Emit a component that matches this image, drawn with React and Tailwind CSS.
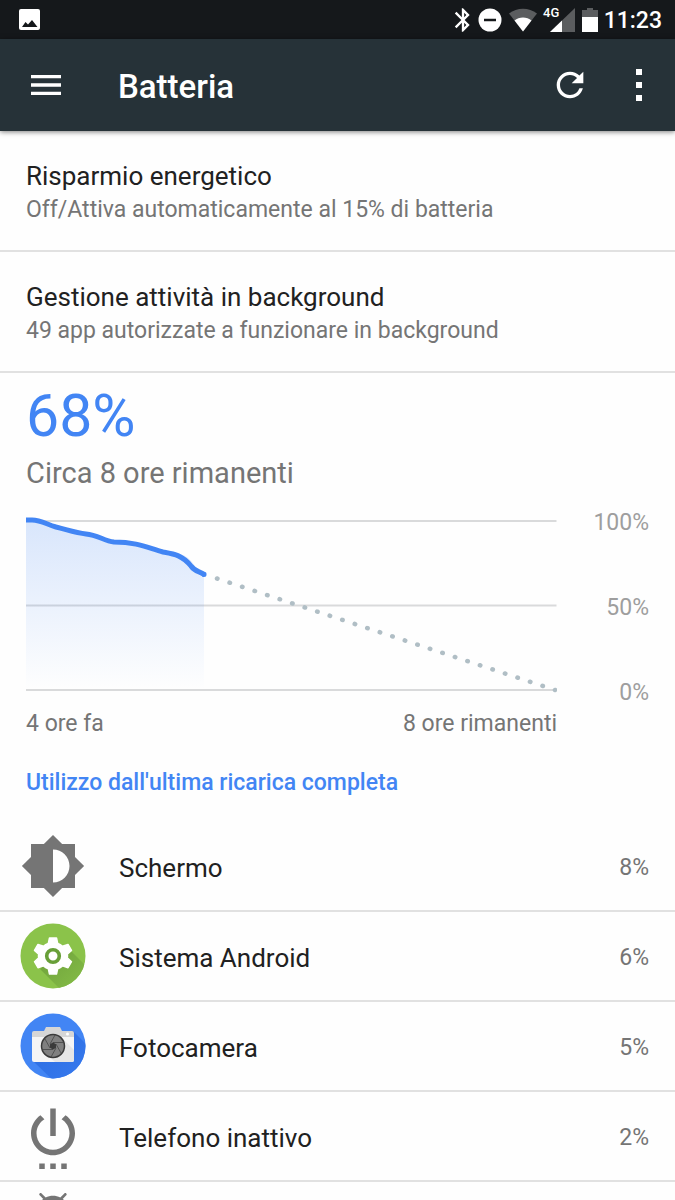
import { MdRefresh, MdMenu, MdBluetooth } from 'react-icons/md'

const usage = [
  { name: 'Schermo', value: '8%', Icon: ScreenIcon },
  { name: 'Sistema Android', value: '6%', Icon: SystemIcon },
  { name: 'Fotocamera', value: '5%', Icon: CameraIcon },
  { name: 'Telefono inattivo', value: '2%', Icon: IdleIcon },
  { name: '', value: '', Icon: AndroidIcon },
]

function ScreenIcon() {
  return (
    <svg viewBox="0 0 24 24" className="size-[66px] fill-[#757575]">
      <path d="M20 15.31L23.31 12 20 8.69V4h-4.69L12 .69 8.69 4H4v4.69L.69 12 4 15.31V20h4.69L12 23.31 15.31 20H20v-4.69zM12 18V6c3.31 0 6 2.69 6 6s-2.69 6-6 6z" />
    </svg>
  )
}

function SystemIcon() {
  return (
    <svg viewBox="0 0 66 66" className="size-[66px]">
      <defs>
        <clipPath id="systemClip"><circle cx="33" cy="33" r="32.5" /></clipPath>
        <linearGradient id="systemShade" x1="0" y1="0" x2="1" y2="1">
          <stop offset="0.2" stopColor="#74a83e" />
          <stop offset="0.7" stopColor="#85bd47" />
        </linearGradient>
      </defs>
      <circle cx="33" cy="33" r="32.5" fill="#8bc34a" />
      <path d="M50 27L82 59L56 82L20 46L33 33z" fill="url(#systemShade)" clipPath="url(#systemClip)" />
      {/* six-toothed gear with notched sides */}
      <path fill="#fff" stroke="#fff" strokeWidth="1.5" strokeLinejoin="round" d="M29.500 15h7l1.200 5.500c1.800.6 3.400 1.500 4.800 2.800l5.500-1.800l3.500 6l-4.200 3.800c.3 1.200.3 2.400 0 3.600l4.200 3.800l-3.500 6l-5.500-1.800c-1.400 1.300-3 2.200-4.800 2.800L36.500 51h-7l-1.200-5.300c-1.800-.6-3.400-1.500-4.800-2.800l-5.500 1.800l-3.500-6l4.200-3.800c-.3-1.200-.3-2.400 0-3.600l-4.200-3.800l3.500-6l5.500 1.800c1.400-1.300 3-2.200 4.800-2.800z" />
      <circle cx="33" cy="33" r="6.300" fill="#fff" stroke="#689f38" strokeWidth="3.600" />
    </svg>
  )
}

function CameraIcon() {
  return (
    <svg viewBox="0 0 66 66" className="size-[66px]">
      <defs>
        <clipPath id="cameraClip"><circle cx="33" cy="33" r="32.5" /></clipPath>
        <linearGradient id="cameraShade" x1="0" y1="0" x2="1" y2="1">
          <stop offset="0" stopColor="#2a6be0" />
          <stop offset="1" stopColor="#3b7ef2" />
        </linearGradient>
      </defs>
      <circle cx="33" cy="33" r="32.5" fill="#4285f4" />
      <path d="M53 18L80 45V80H46L13 48z" fill="url(#cameraShade)" clipPath="url(#cameraClip)" />
      <path d="M24 18l2-4h14l2 4h10a2 2 0 0 1 2 2v5H12v-5a2 2 0 0 1 2-2z" fill="#d6d6d6" />
      <path d="M12 24h42v23a2 2 0 0 1-2 2H14a2 2 0 0 1-2-2z" fill="#f5f5f5" />
      <path d="M42 25L54 37v10a2 2 0 0 1-2 2H35l-8-7z" fill="#e6e6e6" />
      <circle cx="47.500" cy="21" r="1.500" fill="#fff" />
      <circle cx="33" cy="33" r="11.500" fill="#808080" stroke="#3a3a3a" strokeWidth="1.500" />
      <path d="M33 29.500L43 29.500M36 31L41 40M36 35L31 44M33 36.500L23 36.500M30 35L25 26M30 31L35 22" stroke="#454545" strokeWidth="0.8" />
      <path d="M33 29.500l3 1.750v3.500l-3 1.750l-3 -1.750v-3.500z" fill="#3a3a3a" />
    </svg>
  )
}

function IdleIcon() {
  return (
    <svg viewBox="0 0 24 24" className="size-[66px] fill-[#757575]">
      <path d="M7 24h2v-2H7v2zm4 0h2v-2h-2v2zm2-22h-2v10h2V2zm3.56 2.44l-1.45 1.45C16.84 6.94 18 8.83 18 11c0 3.31-2.69 6-6 6s-6-2.69-6-6c0-2.17 1.16-4.06 2.88-5.12L7.44 4.44C5.36 5.88 4 8.28 4 11c0 4.42 3.58 8 8 8s8-3.58 8-8c0-2.72-1.36-5.12-3.44-6.56zM15 24h2v-2h-2v2z" />
    </svg>
  )
}

function AndroidIcon() {
  return (
    <svg viewBox="0 0 24 24" className="size-[66px] fill-[#757575]">
      <path d="M6 18c0 .55.45 1 1 1h1v3.500c0 .83.67 1.500 1.500 1.500s1.500-.67 1.500-1.500V19h2v3.500c0 .83.67 1.500 1.500 1.500s1.500-.67 1.500-1.500V19h1c.55 0 1-.45 1-1V8H6v10zM15.530 2.160l1.300-1.300c.2-.2.2-.51 0-.71-.2-.2-.51-.2-.71 0l-1.480 1.480C13.850 1.230 12.950 1 12 1c-.96 0-1.860.23-2.660.63L7.850.15c-.2-.2-.51-.2-.71 0-.2.2-.2.51 0 .71l1.310 1.310C6.970 3.260 6 5.010 6 7h12c0-1.990-.97-3.750-2.470-4.840z" />
    </svg>
  )
}

function StatusBar() {
  return (
    <div className="flex h-[39px] shrink-0 items-center justify-between bg-[#15181b] pr-[13px] pl-[19px] text-white">
      <svg viewBox="0 0 21 21" className="size-[21px]">
        <rect width="21" height="21" rx="2" fill="#fff" />
        <path d="M3 18L6.500 13L9 15.500L13 11L18.500 18z" fill="#15181b" />
      </svg>
      <div className="flex items-center">
        <MdBluetooth className="h-7 w-7" />
        <svg viewBox="0 0 24 24" className="ml-px size-6">
          <circle cx="12" cy="12" r="11.500" fill="#fff" />
          <path d="M6 12h12" stroke="#15181b" strokeWidth="2.500" />
        </svg>
        <svg viewBox="0 0 30 24" className="ml-1.5 h-6 w-[30px]">
          <path d="M15 23.500L1 5.500C9 -1 21 -1 29 5.500z" fill="#5b5d5f" />
          <path d="M15 23.500L6.500 12.500C11 8.500 19 8.500 23.500 12.500z" fill="#fff" />
        </svg>
        <svg viewBox="0 0 34 29" className="ml-1 h-[29px] w-[34px]">
          <path d="M33 3V27H8z" fill="#5b5d5f" />
          <path d="M20 15.500V27H8z" fill="#fff" />
          <text x="1" y="12" fontSize="13" fontFamily="Roboto" fontWeight="500" fill="#fff">4G</text>
        </svg>
        <svg viewBox="0 0 16 24" className="ml-1.5 h-6 w-4">
          <path d="M5 0h6v2h5v7H0V2h5z" fill="#5b5d5f" />
          <path d="M0 9h16v15H0z" fill="#fff" />
        </svg>
        <time className="ml-1.5 pt-0.5 text-[23px] leading-6 font-medium">11:23</time>
      </div>
    </div>
  )
}

function Preference({ title, summary }) {
  return (
    <a href="#" className="block border-b-2 border-[#e1e1e1] px-[26px] pt-7 pb-6">
      <span className="block text-[26px] leading-[35px] text-[#212121]">{title}</span>
      <span className="block text-[23px] leading-8 text-[#757575]">{summary}</span>
    </a>
  )
}

function BatteryChart() {
  return (
    <div className="mt-[17px] flex items-start">
      <div className="min-w-0 flex-1 pt-[7px]">
        <svg viewBox="0 0 531 178" className="block w-full">
          <defs>
            <linearGradient id="levelFill" x1="0" y1="0" x2="0" y2="1">
              <stop offset="0" stopColor="#4285f4" stopOpacity="0.2" />
              <stop offset="1" stopColor="#4285f4" stopOpacity="0" />
            </linearGradient>
          </defs>
          <path d="M0 5H530.500M0 89.500H530.500M0 174H530.500" stroke="#d9dadb" strokeWidth="2" />
          <path d="M0 4H8C18 5 22 9 38 12C52 17 66 17 76 21C84 24 86 26 95 26C116 27 124 31 138 35C150 38 158 36 166 46C170 52 172 54 178 58V174H0z" fill="url(#levelFill)" />
          <path d="M0 4H6C15 4 20 8 30 11C42 14 50 17 60 18C72 19 78 25 88 26C112 26 122 32 137 36C148 38 156 39 165 50C169 56 174 55 179 59" fill="none" stroke="#4285f4" strokeWidth="5" />
          <circle cx="178" cy="58.500" r="2.500" fill="#4285f4" />
          <path d="M191 62.500L529 174" fill="none" stroke="#b0bec5" strokeWidth="4.500" strokeLinecap="round" strokeDasharray="0.500 12.680" />
        </svg>
        <div className="mt-4 flex justify-between text-[23px] leading-7 text-[#757575]">
          <span>4 ore fa</span>
          <span>8 ore rimanenti</span>
        </div>
      </div>
      <div className="flex w-[92px] shrink-0 flex-col gap-[57px] text-right text-[23px] leading-7 text-[#9e9e9e]">
        <span>100%</span>
        <span>50%</span>
        <span>0%</span>
      </div>
    </div>
  )
}

export default function App() {
  return (
    <div className="flex h-screen flex-col overflow-hidden bg-[#fefefe] font-[Roboto,sans-serif]">
      <StatusBar />

      <header className="z-10 flex h-[92px] shrink-0 items-center bg-[#263238] pr-4 pl-[26px] text-white shadow-[0_1px_5px_rgba(0,0,0,0.5)]">
        <button aria-label="Menu">
          <MdMenu className="size-10" />
        </button>
        <h1 className="ml-[52px] flex-1 pt-1 text-[33px] leading-10 font-medium">Batteria</h1>
        <button aria-label="Aggiorna">
          <MdRefresh className="size-10" />
        </button>
        <button aria-label="Altre opzioni" className="ml-[29px]">
          <svg viewBox="0 0 40 40" className="size-10" fill="#fff">
            <path d="M17 4h6v6h-6zM17 17h6v6h-6zM17 30h6v6h-6z" />
          </svg>
        </button>
      </header>

      <main className="min-h-0 flex-1 overflow-hidden">
        <Preference title="Risparmio energetico" summary="Off/Attiva automaticamente al 15% di batteria" />
        <Preference title="Gestione attività in background" summary="49 app autorizzate a funzionare in background" />

        <section className="px-[26px] pt-2">
          <p className="text-[59px] leading-[70px] text-[#4285f4]">68%</p>
          <p className="mt-1 text-[29px] leading-[37px] text-[#757575]">Circa 8 ore rimanenti</p>
          <BatteryChart />
          <h2 className="mt-[31px] text-[23px] leading-7 font-medium text-[#4285f4]">Utilizzo dall'ultima ricarica completa</h2>
        </section>

        <ul className="mt-[25px]">
          {usage.map(({ name, value, Icon }) => (
            <li key={name} className="flex h-[90px] items-center border-b-2 border-[#e1e1e1] pr-[26px] pl-5">
              <Icon />
              <span className="ml-[33px] flex-1 pt-1 text-[26px] leading-8 text-[#212121]">{name}</span>
              <span className="pt-1 text-[23px] leading-8 text-[#757575]">{value}</span>
            </li>
          ))}
        </ul>
      </main>
    </div>
  )
}
